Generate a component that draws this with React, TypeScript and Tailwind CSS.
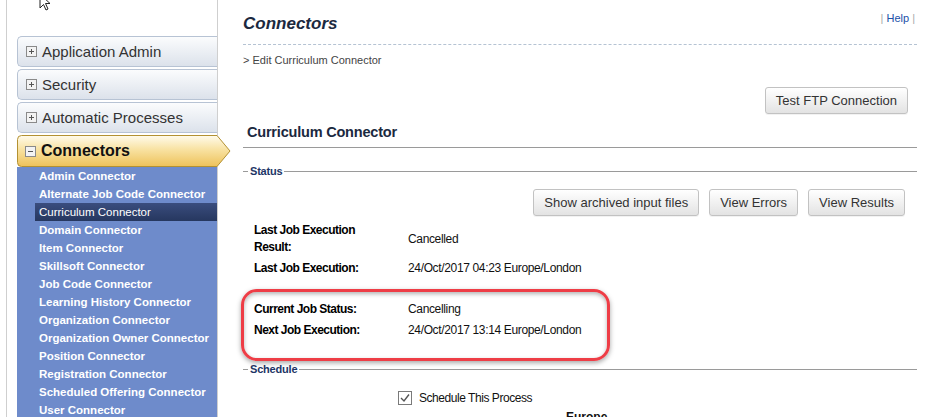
import React from "react";

const subItems = [
  "Admin Connector",
  "Alternate Job Code Connector",
  "Curriculum Connector",
  "Domain Connector",
  "Item Connector",
  "Skillsoft Connector",
  "Job Code Connector",
  "Learning History Connector",
  "Organization Connector",
  "Organization Owner Connector",
  "Position Connector",
  "Registration Connector",
  "Scheduled Offering Connector",
  "User Connector",
];

function BoxIcon({ minus }: { minus?: boolean }) {
  return (
    <svg width="11" height="11" viewBox="0 0 11 11" className="shrink-0">
      <rect x="0.5" y="0.5" width="10" height="10" fill="#f3f3f3" stroke="#8a8a8a" />
      <path d="M3 5.5H8" stroke="#555" strokeWidth="1" />
      {!minus && <path d="M5.5 3V8" stroke="#555" strokeWidth="1" />}
    </svg>
  );
}

function MenuItem({ label }: { label: string }) {
  return (
    <div className="h-[31px] mb-[2px] flex items-center gap-[5px] pl-[8px] rounded-l-[5px] border border-r-0 border-[#b7c3d4] bg-linear-to-b from-[#fbfcfd] to-[#dce2eb] text-[15px] text-[#333] leading-none">
      <BoxIcon />
      <span>{label}</span>
    </div>
  );
}

function Btn({ children }: { children: React.ReactNode }) {
  return (
    <button className="h-[27px] px-[10px] rounded-[3px] border border-[#c2c2c2] bg-linear-to-b from-white to-[#e3e3e3] text-[13px] text-[#333] leading-none shadow-[0_1px_0_rgba(0,0,0,0.05)]">
      {children}
    </button>
  );
}

function Legend({ label }: { label: string }) {
  return (
    <div className="flex items-center h-[14px]">
      <div className="w-[5px] h-px bg-[#9a9a9a]" />
      <span className="px-[2px] text-[11px] font-bold text-[#1d3566] tracking-[-0.2px] leading-none">{label}</span>
      <div className="flex-1 h-px bg-[#9a9a9a]" />
    </div>
  );
}

function Row({ label, value }: { label: string; value: string }) {
  return (
    <div className="grid grid-cols-[154px_1fr] items-center py-[2px] leading-[17px]">
      <div className="pr-[34px] text-[12px] font-bold text-black tracking-[-0.5px]">{label}</div>
      <div className="text-[12px] text-[#111] tracking-[-0.35px]">{value}</div>
    </div>
  );
}

export default function App() {
  return (
    <div className="relative w-[934px] h-[417px] overflow-hidden bg-white flex font-['Liberation_Sans',Arial,sans-serif]">
      {/* sidebar */}
      <div className="ml-[6px] w-[212px] shrink-0 border-l border-r border-[#cfcfcf] pl-[10px] pt-[36px]">
        <MenuItem label="Application Admin" />
        <MenuItem label="Security" />
        <MenuItem label="Automatic Processes" />
        <div className="relative z-10 w-[214px] h-[32px] flex items-center gap-[5px] pl-[8px]">
          <svg width="214" height="32" viewBox="0 0 214 32" className="absolute inset-0">
            <defs>
              <linearGradient id="gold" x1="0" y1="0" x2="0" y2="1">
                <stop offset="0" stopColor="#fffbec" />
                <stop offset="0.45" stopColor="#f8e2a2" />
                <stop offset="1" stopColor="#eec25a" />
              </linearGradient>
            </defs>
            <path d="M4.5 0.5H200L213 16L200 31.5H4.5Q0.5 31.5 0.5 27.5V4.5Q0.5 0.5 4.5 0.5Z" fill="url(#gold)" stroke="#b39132" />
          </svg>
          <span className="relative"><BoxIcon minus /></span>
          <span className="relative text-[16px] font-bold text-[#111] leading-none">Connectors</span>
        </div>
        <div className="bg-[#6e8bcb] pb-[20px]">
          {subItems.map((s) =>
            s === "Curriculum Connector" ? (
              <div key={s} className="h-[18px] ml-[18px] pl-[4px] bg-linear-to-b from-[#3a4d7e] to-[#26375f] text-white text-[11.5px] leading-[18px]">
                {s}
              </div>
            ) : (
              <div key={s} className="h-[18px] pl-[22px] text-white text-[11.5px] font-bold leading-[18px]">
                {s}
              </div>
            )
          )}
        </div>
      </div>

      {/* main */}
      <div className="flex-1 pl-[25px] pr-[17px]">
        <div className="h-[45px] flex justify-between border-b border-dashed border-[#b5c3d3]">
          <div className="pt-[14px] text-[17px] font-bold italic text-[#1b2940] leading-[20px]">Connectors</div>
          <div className="pt-[11px] text-[11px] leading-[14px] pr-[2px]">
            <span className="text-[#aaa]">| </span>
            <span className="text-[#2150a8]">Help</span>
            <span className="text-[#aaa]"> |</span>
          </div>
        </div>
        <div className="mt-[8px] text-[11px] leading-[14px] text-[#444]">&gt; Edit Curriculum Connector</div>
        <div className="mt-[20px] flex justify-end pr-[9px]">
          <Btn>Test FTP Connection</Btn>
        </div>
        <div className="pt-[9px] pb-[6px] pl-[4px] border-b border-[#9a9a9a] text-[14.5px] font-bold text-[#1b2940] leading-[18px] tracking-[-0.2px]">
          Curriculum Connector
        </div>
        <div className="mt-[16px]">
          <Legend label="Status" />
        </div>
        <div className="mt-[11px] flex justify-end gap-[10px] pr-[12px]">
          <Btn>Show archived input files</Btn>
          <Btn>View Errors</Btn>
          <Btn>View Results</Btn>
        </div>
        <div className="mt-[4px] pl-[11px]">
          <Row label="Last Job Execution Result:" value="Cancelled" />
          <Row label="Last Job Execution:" value="24/Oct/2017 04:23 Europe/London" />
          <div className="h-[20px]" />
          <Row label="Current Job Status:" value="Cancelling" />
          <Row label="Next Job Execution:" value="24/Oct/2017 13:14 Europe/London" />
        </div>
        <div className="mt-[21px]">
          <Legend label="Schedule" />
        </div>
        <div className="mt-[13px] pl-[155px] flex items-center gap-[7px] h-[17px]">
          <svg width="14" height="14" viewBox="0 0 14 14">
            <rect x="0.5" y="0.5" width="13" height="13" fill="white" stroke="#7a7a7a" />
            <path d="M3 7L6 10L11 3.5" fill="none" stroke="#555" strokeWidth="1.4" />
          </svg>
          <span className="text-[12px] text-[#111] tracking-[-0.45px]">Schedule This Process</span>
        </div>
        <div className="mt-[4px] pl-[323px] text-[12px] font-bold text-[#111] leading-[14px]">Europe</div>
      </div>

      {/* mouse pointer */}
      <svg width="14" height="20" viewBox="0 0 14 20" className="absolute left-[39px] top-[-7px]">
        <path d="M1 1V15L4.5 11.5L7 17L9 16L6.5 10.5H11Z" fill="white" stroke="#222" strokeWidth="1" />
      </svg>

      {/* annotation */}
      <div className="absolute left-[241px] top-[289px] w-[369px] h-[72px] rounded-[16px] border-[3px] border-[#ee3d46] shadow-[0_2px_5px_rgba(0,0,0,0.35),inset_0_2px_4px_rgba(0,0,0,0.3)]" />
    </div>
  );
}
